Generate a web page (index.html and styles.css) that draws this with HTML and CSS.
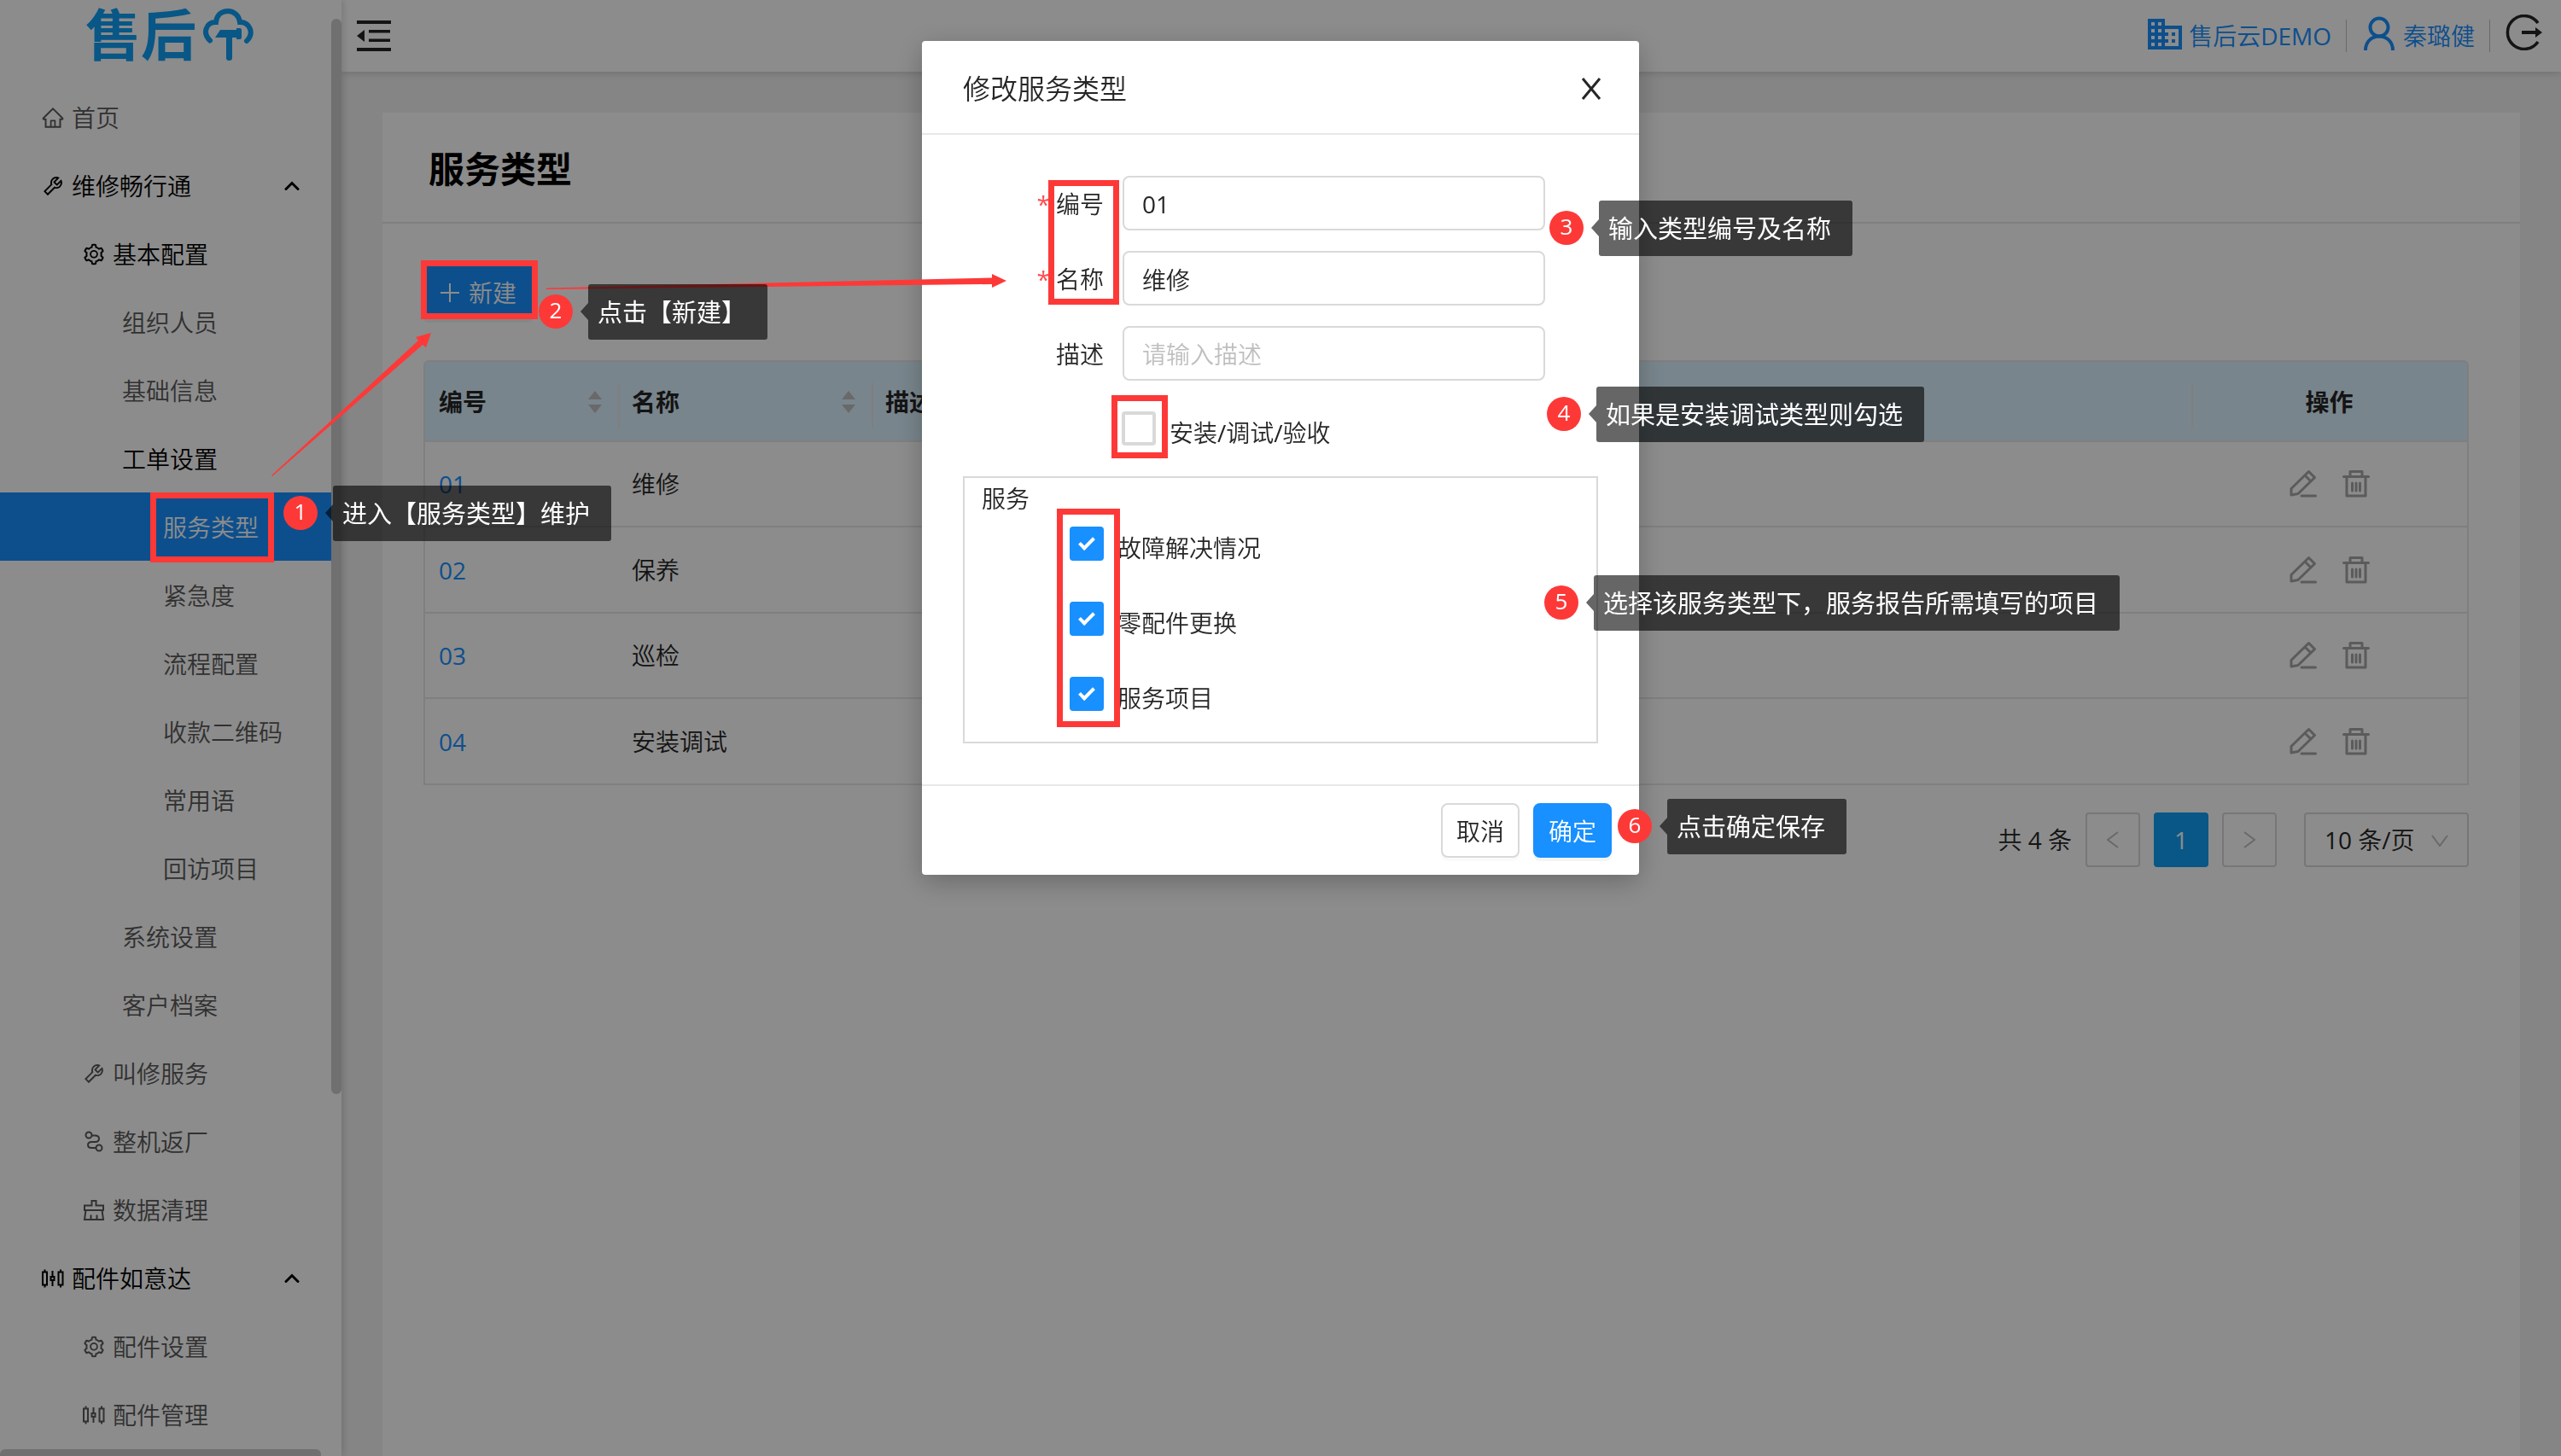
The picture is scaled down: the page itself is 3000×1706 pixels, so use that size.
FILE: index.html
```html
<!DOCTYPE html>
<html lang="zh-CN">
<head>
<meta charset="utf-8">
<meta name="viewport" content="width=device-width, initial-scale=1">
<title>服务类型</title>
<link rel="stylesheet" href="styles.css">
</head>
<body>
<svg class="sprite" aria-hidden="true">
  <symbol id="i-home" viewBox="0 0 1024 1024"><path d="M946.5 505L560.1 118.8l-25.9-25.9a31.5 31.5 0 0 0-44.4 0L77.5 505a63.9 63.9 0 0 0-18.8 46c.4 35.2 29.7 63.3 64.9 63.3h42.5V940h691.8V614.3h43.4c17.1 0 33.2-6.7 45.3-18.8a63.6 63.6 0 0 0 18.7-45.3c0-17-6.7-33.1-18.9-45.2zM568 868H456V664h112v204zm217.9-325.7V868H632V640c0-22.1-17.9-40-40-40H432c-22.1 0-40 17.9-40 40v228H238.1V542.3h-96l370-369.7 23.1 23.1L882 542.3h-96.1z"/></symbol>
  <symbol id="i-tool" viewBox="0 0 1024 1024"><path d="M876.6 239.5c-.5-.9-1.2-1.8-2-2.5-5-5-13.1-5-18.1 0L684.2 409.3l-67.9-67.9L788.7 169c.8-.8 1.4-1.6 2-2.5 3.6-6.1 1.6-13.9-4.5-17.5-98.2-58-226.8-44.7-311.3 39.7-67 67-89.2 162-66.5 247.4l-293 293c-3 3-2.8 7.9.3 11l169.7 169.7c3.1 3.1 8.1 3.3 11 .3l292.9-292.9c85.5 22.8 180.5.7 247.6-66.4 84.4-84.5 97.7-213.1 39.7-311.3zM786 499.8c-58.1 58.1-145.3 69.3-214.6 33.6l-8.8 8.8-.1-.1-274 274.1-79.2-79.2 230.1-230.1s0 .1.1.1l52.8-52.8c-35.7-69.3-24.5-156.5 33.6-214.6a184.2 184.2 0 0 1 144-53.5L537 318.9a32.05 32.05 0 0 0 0 45.3l124.5 124.5a32.05 32.05 0 0 0 45.3 0l132.8-132.8c3.7 51.8-14.4 104.8-53.6 143.9z"/></symbol>
  <symbol id="i-setting" viewBox="0 0 1024 1024"><path d="M924.8 625.7l-65.5-56c3.1-19 4.7-38.4 4.7-57.8s-1.6-38.8-4.7-57.8l65.5-56a32.03 32.03 0 0 0 9.3-35.2l-.9-2.6a443.74 443.74 0 0 0-79.7-137.9l-1.8-2.1a32.12 32.12 0 0 0-35.1-9.5l-81.3 28.9c-30-24.6-63.5-44-99.7-57.6l-15.7-85a32.05 32.05 0 0 0-25.8-25.7l-2.7-.5c-52.1-9.4-106.9-9.4-159 0l-2.7.5a32.05 32.05 0 0 0-25.8 25.7l-15.8 85.4a351.86 351.86 0 0 0-99 57.4l-81.9-29.1a32 32 0 0 0-35.1 9.5l-1.8 2.1a446.02 446.02 0 0 0-79.7 137.9l-.9 2.6c-4.5 12.5-.8 26.5 9.3 35.2l66.3 56.6c-3.1 18.8-4.6 38-4.6 57.1 0 19.2 1.5 38.4 4.6 57.1L99 625.5a32.03 32.03 0 0 0-9.3 35.2l.9 2.6c18.1 50.4 44.9 96.9 79.7 137.9l1.8 2.1a32.12 32.12 0 0 0 35.1 9.5l81.9-29.1c29.8 24.5 63.1 43.9 99 57.4l15.8 85.4a32.05 32.05 0 0 0 25.8 25.7l2.7.5a449.4 449.4 0 0 0 159 0l2.7-.5a32.05 32.05 0 0 0 25.8-25.7l15.7-85a350 350 0 0 0 99.7-57.6l81.3 28.9a32 32 0 0 0 35.1-9.5l1.8-2.1c34.8-41.1 61.6-87.5 79.7-137.9l.9-2.6c4.5-12.3.8-26.3-9.3-35zM788.3 465.9c2.5 15.1 3.8 30.6 3.8 46.1s-1.3 31-3.8 46.1l-6.6 40.1 74.7 63.9a370.03 370.03 0 0 1-42.6 73.6L721 702.8l-31.4 25.8c-23.9 19.6-50.5 35-79.3 45.8l-38.1 14.3-17.9 97a377.5 377.5 0 0 1-85 0l-17.9-97.2-37.8-14.5c-28.5-10.8-55-26.2-78.7-45.7l-31.4-25.9-93.4 33.2c-17-22.9-31.2-47.6-42.6-73.6l75.5-64.5-6.5-40c-2.4-14.9-3.7-30.3-3.7-45.5 0-15.3 1.2-30.6 3.7-45.5l6.5-40-75.5-64.5c11.3-26.1 25.6-50.7 42.6-73.6l93.4 33.2 31.4-25.9c23.7-19.5 50.2-34.9 78.7-45.7l37.9-14.3 17.9-97.2c28.1-3.2 56.8-3.2 85 0l17.9 97 38.1 14.3c28.7 10.8 55.4 26.2 79.3 45.8l31.4 25.8 92.8-32.9c17 22.9 31.2 47.6 42.6 73.6L781.8 426l6.5 39.9zM512 326c-97.2 0-176 78.8-176 176s78.8 176 176 176 176-78.8 176-176-78.8-176-176-176zm79.2 255.2A111.6 111.6 0 0 1 512 614c-29.9 0-58-11.7-79.2-32.8A111.6 111.6 0 0 1 400 502c0-29.9 11.7-58 32.8-79.2C454 401.6 482.1 390 512 390c29.9 0 58 11.6 79.2 32.8A111.6 111.6 0 0 1 624 502c0 29.9-11.7 58-32.8 79.2z"/></symbol>
  <symbol id="i-sliders" viewBox="0 0 28 28"><path fill="none" stroke="currentColor" stroke-width="2" d="M2 6.500h5v15H2zM4.500 3.500v3M4.500 21.500v3M11.500 12h4v4h-4zM13.500 5v7M13.500 16v7M20.500 6.500h5v15h-5zM23 3.500v3M23 21.500v3"/></symbol>
  <symbol id="i-route" viewBox="0 0 28 28"><g fill="none" stroke="currentColor" stroke-width="2"><circle cx="8" cy="6" r="3.500"/><circle cx="20" cy="21" r="3.500"/><path d="M11.500 6.500h4c6 0 6 7.500 0 7.500h-4c-6 0-6 7 0 7h5"/></g></symbol>
  <symbol id="i-clear" viewBox="0 0 28 28"><path fill="none" stroke="currentColor" stroke-width="2" d="M3 8.500h8.500V3h5v5.500H25V14H3zM4.500 14L3 25h22l-1.500-11M10.500 25v-5.500M17.500 25v-5.500"/></symbol>
  <symbol id="i-up" viewBox="0 0 18 12"><path fill="none" stroke="currentColor" stroke-width="3" d="M2 9.500L9 2.500l7 7" stroke-linecap="round"/></symbol>
  <symbol id="i-edit" viewBox="0 0 32 34"><path fill="none" stroke="currentColor" stroke-width="3" stroke-linejoin="round" stroke-linecap="round" d="M2 30v-7.500L22.500 2.500l7 7L10 28.500zM18 7l7 7M14 31h16.500"/></symbol>
  <symbol id="i-trash" viewBox="0 0 32 34"><path fill="none" stroke="currentColor" stroke-width="3" stroke-linejoin="round" stroke-linecap="round" d="M1.500 8.500h29M5 8.500V31h22V8.500M9 8V2.500h14V8M11.500 16v9M16 16v9M20.500 16v9"/></symbol>
</svg>

<div class="app">
  <aside class="sidebar">
    <div class="logo"><span class="logo-text">售后</span>
      <svg class="logo-mark" width="60" height="62" viewBox="0 0 60 62" aria-hidden="true"><g fill="none" stroke="currentColor" stroke-width="6" stroke-linecap="round"><path d="M8 37.500C-1 29 3 16 15 16C16 7 22 3 29 3s13 5 14 13c12 0 17 13 8 22"/></g><path fill="currentColor" d="M14 34l6-9h19v-2h5l1 2v9l-1 2h-5v-2h-5v24q0 3-3.500 3t-3.500-3V34z"/></svg>
    </div>
    <nav aria-label="主导航">
      <ul class="menu">
        <li><a href="#" class="l1"><svg class="ico"><use href="#i-home"/></svg>首页</a></li>
        <li><a href="#" class="l1 open"><svg class="ico"><use href="#i-tool"/></svg>维修畅行通<svg class="caret"><use href="#i-up"/></svg></a></li>
        <li><a href="#" class="l2 open"><svg class="ico"><use href="#i-setting"/></svg>基本配置</a></li>
        <li><a href="#" class="l3">组织人员</a></li>
        <li><a href="#" class="l3">基础信息</a></li>
        <li><a href="#" class="l3 open">工单设置</a></li>
        <li><a href="#" class="l4 active" aria-current="page">服务类型</a></li>
        <li><a href="#" class="l4">紧急度</a></li>
        <li><a href="#" class="l4">流程配置</a></li>
        <li><a href="#" class="l4">收款二维码</a></li>
        <li><a href="#" class="l4">常用语</a></li>
        <li><a href="#" class="l4">回访项目</a></li>
        <li><a href="#" class="l3">系统设置</a></li>
        <li><a href="#" class="l3">客户档案</a></li>
        <li><a href="#" class="l2"><svg class="ico"><use href="#i-tool"/></svg>叫修服务</a></li>
        <li><a href="#" class="l2"><svg class="ico"><use href="#i-route"/></svg>整机返厂</a></li>
        <li><a href="#" class="l2"><svg class="ico"><use href="#i-clear"/></svg>数据清理</a></li>
        <li><a href="#" class="l1 open"><svg class="ico"><use href="#i-sliders"/></svg>配件如意达<svg class="caret"><use href="#i-up"/></svg></a></li>
        <li><a href="#" class="l2"><svg class="ico"><use href="#i-setting"/></svg>配件设置</a></li>
        <li><a href="#" class="l2"><svg class="ico"><use href="#i-sliders"/></svg>配件管理</a></li>
      </ul>
    </nav>
    <div class="scroll-y"></div>
    <div class="scroll-x"></div>
  </aside>

  <div class="page">
    <header class="topbar">
      <button class="icon-btn" type="button" aria-label="收起菜单"><svg width="40" height="36" viewBox="0 0 40 36"><path fill="currentColor" d="M0 0h40v4H0zM14 11h25v3.500H14zM14 21.500h25V25H14zM0 32h40v4H0zM9 11v14L0 18z"/></svg></button>
      <div class="account">
        <a href="#" class="tenant"><svg width="40" height="36" viewBox="0 0 40 36"><path fill="currentColor" fill-rule="evenodd" d="M0 0h20v8h20v28H0zM4 4v4h4V4zM12 4v4h4V4zM4 12v4h4v-4zM12 12v4h4v-4zM4 20v4h4v-4zM12 20v4h4v-4zM4 28v4h4v-4zM12 28v4h4v-4zM20 12v4h4v4h-4v4h4v4h-4v4h16V12zM28 16h4v4h-4zM28 24h4v4h-4z"/></svg><span>售后云DEMO</span></a>
        <a href="#" class="user"><svg width="38" height="42" viewBox="0 0 38 42"><g fill="none" stroke="currentColor" stroke-width="4"><circle cx="19" cy="13" r="10.500"/><path d="M3 40c0-22 32-22 32 0"/></g></svg><span>秦璐健</span></a>
        <button class="icon-btn" type="button" aria-label="退出"><svg width="44" height="42" viewBox="0 0 44 42"><path fill="none" stroke="currentColor" stroke-width="3.500" d="M39 10A19.500 19.500 0 1 0 39 32"/><path fill="currentColor" d="M20 19h16v-4l8 6-8 6v-4H20z"/></svg></button>
      </div>
    </header>

    <main class="content">
      <section class="card">
        <h1>服务类型</h1>
        <div class="card-body">
          <button class="btn-new" type="button"><svg width="22" height="22" viewBox="0 0 22 22"><path stroke="currentColor" stroke-width="2" d="M11 0v22M0 11h22"/></svg>新建</button>
          <table>
            <colgroup><col class="c-code"><col class="c-name"><col><col class="c-act"></colgroup>
            <thead><tr>
              <th><div class="th">编号<svg class="sorter" viewBox="0 0 16 26"><path d="M8 0l8 10H0zM8 26l8-10H0z"/></svg></div></th>
              <th><div class="th">名称<svg class="sorter" viewBox="0 0 16 26"><path d="M8 0l8 10H0zM8 26l8-10H0z"/></svg></div></th>
              <th><div class="th">描述</div></th>
              <th class="act">操作</th>
            </tr></thead>
            <tbody>
              <tr><td><a href="#">01</a></td><td>维修</td><td></td><td><div class="ops"><button class="icon-btn" type="button" aria-label="编辑"><svg width="32" height="34"><use href="#i-edit"/></svg></button><button class="icon-btn" type="button" aria-label="删除"><svg width="32" height="34"><use href="#i-trash"/></svg></button></div></td></tr>
              <tr><td><a href="#">02</a></td><td>保养</td><td></td><td><div class="ops"><button class="icon-btn" type="button" aria-label="编辑"><svg width="32" height="34"><use href="#i-edit"/></svg></button><button class="icon-btn" type="button" aria-label="删除"><svg width="32" height="34"><use href="#i-trash"/></svg></button></div></td></tr>
              <tr><td><a href="#">03</a></td><td>巡检</td><td></td><td><div class="ops"><button class="icon-btn" type="button" aria-label="编辑"><svg width="32" height="34"><use href="#i-edit"/></svg></button><button class="icon-btn" type="button" aria-label="删除"><svg width="32" height="34"><use href="#i-trash"/></svg></button></div></td></tr>
              <tr><td><a href="#">04</a></td><td>安装调试</td><td></td><td><div class="ops"><button class="icon-btn" type="button" aria-label="编辑"><svg width="32" height="34"><use href="#i-edit"/></svg></button><button class="icon-btn" type="button" aria-label="删除"><svg width="32" height="34"><use href="#i-trash"/></svg></button></div></td></tr>
            </tbody>
          </table>
          <div class="pager">
            <span>共 4 条</span>
            <button class="pg off" type="button" aria-label="上一页"><svg width="14" height="20" viewBox="0 0 14 20"><path fill="none" stroke="currentColor" stroke-width="2" d="M13 1L1 10l12 9"/></svg></button>
            <button class="pg on" type="button">1</button>
            <button class="pg off" type="button" aria-label="下一页"><svg width="14" height="20" viewBox="0 0 14 20"><path fill="none" stroke="currentColor" stroke-width="2" d="M1 1l12 9-12 9"/></svg></button>
            <div class="size">
              <select aria-label="每页条数"><option>10 条/页</option></select>
              <svg width="20" height="14" viewBox="0 0 20 14"><path fill="none" stroke="currentColor" stroke-width="2" d="M1 1l9 12 9-12"/></svg>
            </div>
          </div>
        </div>
      </section>
    </main>
  </div>
</div>

<div class="mask">
  <form class="modal" role="dialog" aria-labelledby="dlg-title">
    <header class="modal-head">
      <h2 id="dlg-title">修改服务类型</h2>
      <button class="icon-btn" type="button" aria-label="关闭"><svg width="24" height="26" viewBox="0 0 24 26"><path stroke="currentColor" stroke-width="3" d="M2 1l20 24M22 1L2 25"/></svg></button>
    </header>
    <div class="modal-body">
      <div class="field req"><label for="f-code">编号</label><input id="f-code" type="text" value="01"></div>
      <div class="field req"><label for="f-name">名称</label><input id="f-name" type="text" value="维修"></div>
      <div class="field"><label for="f-desc">描述</label><input id="f-desc" type="text" placeholder="请输入描述"></div>
      <div class="check install"><input id="f-install" type="checkbox"><label for="f-install">安装/调试/验收</label></div>
      <div class="group" role="group" aria-labelledby="grp">
        <p id="grp">服务</p>
        <div class="check"><input id="s1" type="checkbox" checked><label for="s1">故障解决情况</label></div>
        <div class="check"><input id="s2" type="checkbox" checked><label for="s2">零配件更换</label></div>
        <div class="check"><input id="s3" type="checkbox" checked><label for="s3">服务项目</label></div>
      </div>
    </div>
    <footer class="modal-foot">
      <button class="btn" type="button">取消</button>
      <button class="btn primary" type="button">确定</button>
    </footer>
    <div class="frame frame-fields"></div>
    <div class="frame frame-install"></div>
    <div class="frame frame-services"></div>
    <div class="note n3"><b>3</b><span>输入类型编号及名称</span></div>
    <div class="note n4"><b>4</b><span>如果是安装调试类型则勾选</span></div>
    <div class="note n5"><b>5</b><span>选择该服务类型下，服务报告所需填写的项目</span></div>
    <div class="note n6"><b>6</b><span>点击确定保存</span></div>
  </form>
</div>

<div class="guide">
  <svg class="arrow a1" width="190" height="170" viewBox="0 0 190 170"><path d="M0 167L172 9 169 5 187 0 181 17 177 14 1 168z"/></svg>
  <svg class="arrow a2" width="540" height="20" viewBox="0 0 540 20"><path d="M0 17.500L522 5.500V1l17 8-17 8v-4L0 19z"/></svg>
  <div class="frame frame-menu"></div>
  <div class="frame frame-new"></div>
  <div class="note n1"><b>1</b><span>进入【服务类型】维护</span></div>
  <div class="note n2"><b>2</b><span>点击【新建】</span></div>
</div>
</body>
</html>
```
FILE: styles.css
```css
:root {
  --blue: #1890ff;
  --brand: #0f9ff5;
  --red: #fd3938;
  --line: #e8e8e8;
  --border: #d9d9d9;
  --text: #262626;
  --strong: "Open Sans", "Noto Sans CJK SC", sans-serif;
}

* { box-sizing: border-box; }

body {
  margin: 0;
  background: #f2f2f2;
  color: var(--text);
  font: 400 28px/44px "Open Sans", "Noto Sans CJK SC DemiLight", "Noto Sans CJK SC", sans-serif;
  overflow: hidden;
}

h1, h2, p, ul { margin: 0; padding: 0; }
ul { list-style: none; }
a { color: var(--blue); text-decoration: none; }
svg { display: block; flex: none; }
button, input, select { font: inherit; color: inherit; margin: 0; }
button { cursor: pointer; }

.sprite { position: absolute; width: 0; height: 0; }

.icon-btn { padding: 0; border: 0; background: none; }

.app { display: flex; min-height: 100vh; }

/* Sidebar */
.sidebar {
  position: relative;
  z-index: 1;
  flex: none;
  width: 400px;
  background: #fff;
  box-shadow: 2px 0 8px rgba(0, 0, 0, .15);
}

.logo {
  display: flex;
  gap: 8px;
  height: 97px;
  padding: 10px 0 0 100px;
  color: var(--brand);
}

.logo-text { font: 700 65px/60px var(--strong); }

.menu { width: 388px; }

.menu a {
  display: flex;
  align-items: center;
  height: 80px;
  padding-top: 2px;
  color: #595959;
}

.menu .l1 { padding-left: 48px; }
.menu .l2 { padding-left: 96px; }
.menu .l3 { padding-left: 143px; }
.menu .l4 { padding-left: 191px; }
.menu .open { color: #000; }
.menu .active { background: var(--blue); color: #fff; }

.ico { width: 28px; height: 28px; margin-right: 8px; fill: currentColor; }
.caret { width: 18px; height: 12px; margin: 0 37px 0 auto; }

.scroll-y, .scroll-x { position: absolute; background: #ccc; }
.scroll-y { top: 22px; right: 0; width: 12px; height: 1260px; border-radius: 6px; }
.scroll-x { left: 0; bottom: 0; width: 376px; height: 8px; border-radius: 6px 6px 0 0; }

/* Top bar */
.page { flex: 1; display: flex; flex-direction: column; min-width: 0; }

.topbar {
  display: flex;
  align-items: center;
  justify-content: space-between;
  height: 84px;
  padding: 0 22px 0 18px;
  background: #fff;
  box-shadow: 0 2px 8px rgba(0, 0, 0, .15);
}

.account { display: flex; align-items: center; height: 38px; }
.account a { display: flex; align-items: center; height: 38px; border-right: 1px solid #bfbfbf; }
.account a svg { margin-bottom: 5px; }
.account .icon-btn { margin-bottom: 8px; }
.tenant { gap: 8px; padding-right: 17px; }
.user { gap: 9px; padding: 0 17px 0 19px; margin-right: 17px; }

/* Card */
.content { flex: 1; display: flex; padding: 48px 48px 0; }
.card { flex: 1; min-width: 0; background: #fff; }

.card h1 {
  padding: 36px 54px 32px;
  border-bottom: 2px solid var(--line);
  color: #000;
  font: 700 42px/60px var(--strong);
}

.card-body { padding: 48px 60px 0 48px; }

.btn-new {
  display: flex;
  align-items: center;
  gap: 11px;
  height: 64px;
  margin-bottom: 48px;
  padding: 2px 20px 0;
  border: 0;
  border-radius: 6px;
  background: var(--blue);
  color: #fff;
  box-shadow: 0 4px 0 rgba(0, 0, 0, .045);
}

table {
  width: 100%;
  table-layout: fixed;
  border: 2px solid var(--line);
  border-bottom: 0;
  border-radius: 6px 6px 0 0;
  border-spacing: 0;
}

.c-code { width: 226px; }
.c-name { width: 297px; }
.c-act { width: 323px; }

th, td {
  height: 100px;
  padding: 0 16px;
  border-bottom: 2px solid var(--line);
  text-align: left;
}

tbody tr:nth-child(even) td { height: 101px; }

th {
  position: relative;
  height: 94px;
  background: #dcf2ff;
  font-family: var(--strong);
  font-weight: 700;
}

th + th::before {
  content: "";
  position: absolute;
  left: 0;
  top: 24px;
  width: 2px;
  height: 54px;
  background: var(--line);
}

.th { display: flex; align-items: center; justify-content: space-between; padding-top: 2px; }
.sorter { width: 16px; height: 26px; margin-right: 3px; fill: #bfbfbf; }
th.act { padding-top: 2px; text-align: center; }
.ops { display: flex; justify-content: center; gap: 30px; color: #a6a6a6; }

/* Pagination */
.pager {
  display: flex;
  align-items: center;
  justify-content: flex-end;
  gap: 16px;
  margin-top: 32px;
}

.pg, .size select {
  height: 64px;
  border: 2px solid var(--border);
  border-radius: 4px;
  background: #fff;
}

.pg { display: grid; place-items: center; width: 64px; padding: 0; }
.pg.off { color: #bfbfbf; }
.pg.on { border-color: var(--brand); background: var(--brand); color: #fff; }

.size { position: relative; margin-left: 16px; }
.size select { appearance: none; width: 193px; padding: 0 22px; }
.size svg { position: absolute; right: 24px; top: 26px; color: #bfbfbf; pointer-events: none; }

/* Dialog */
.mask {
  position: fixed;
  inset: 0;
  z-index: 10;
  background: rgba(0, 0, 0, .45);
}

.modal {
  position: relative;
  width: 840px;
  margin: 48px auto;
  border-radius: 4px;
  background: #fff;
  box-shadow: 0 8px 32px rgba(0, 0, 0, .25);
}

.modal-head {
  display: flex;
  align-items: center;
  justify-content: space-between;
  height: 110px;
  padding: 4px 44px 0 48px;
  border-bottom: 2px solid var(--line);
}

.modal-head h2 { font-size: 32px; font-weight: 400; }

.modal-body { display: grid; gap: 24px; padding: 48px; }

.field { display: flex; align-items: center; padding-right: 62px; }
.field label { width: 187px; padding: 2px 22px 0 0; text-align: right; }
.req label::before { content: "*"; margin-right: 7px; color: #ff4d4f; }

.field input {
  flex: 1;
  min-width: 0;
  height: 64px;
  padding: 2px 21px 0;
  border: 2px solid var(--border);
  border-radius: 8px;
  background: #fff;
}

.field input::placeholder { color: #bfbfbf; opacity: 1; }

.check { display: flex; align-items: center; gap: 16px; height: 64px; }
.check label { padding-top: 10px; }
.install { padding-left: 186px; }

.check input {
  display: grid;
  place-items: center;
  appearance: none;
  width: 40px;
  height: 40px;
  border: 4px solid var(--border);
  border-radius: 4px;
  background: #fff;
}

.check input:checked { border-color: var(--blue); background: var(--blue); }

.check input:checked::after {
  content: "";
  width: 14px;
  height: 6px;
  margin-top: -4px;
  border: solid #fff;
  border-width: 0 0 4px 4px;
  transform: rotate(-45deg);
}

.group {
  display: grid;
  gap: 24px;
  padding: 0 20px 24px;
  border: 2px solid var(--border);
}

.group p { height: 45px; margin-bottom: -24px; padding-top: 2px; }
.group .check { padding-left: 103px; }

.modal-foot {
  display: flex;
  justify-content: flex-end;
  gap: 16px;
  padding: 20px 32px;
  border-top: 2px solid var(--line);
}

.btn {
  width: 92px;
  height: 64px;
  padding: 2px 0 0;
  border: 2px solid var(--border);
  border-radius: 8px;
  background: #fff;
  box-shadow: 0 4px 0 rgba(0, 0, 0, .02);
}

.btn.primary {
  border-color: var(--blue);
  background: var(--blue);
  color: #fff;
  box-shadow: 0 4px 0 rgba(0, 0, 0, .045);
}

/* Step-by-step guide drawn over the page */
.guide { position: absolute; top: 0; left: 0; z-index: 20; }
.frame, .arrow, .note { position: absolute; }
.frame { border: 7px solid var(--red); pointer-events: none; }
.arrow { fill: var(--red); }

.note {
  display: flex;
  gap: 18px;
  height: 65px;
  color: #fff;
  font-family: var(--strong);
  white-space: nowrap;
}

.note b {
  width: 40px;
  height: 40px;
  margin-top: 12px;
  border-radius: 50%;
  background: var(--red);
  font-size: 26px;
  font-weight: 400;
  line-height: 36px;
  text-align: center;
}

.note span {
  position: relative;
  padding: 0 25px 0 11px;
  border-radius: 3px;
  background: rgba(0, 0, 0, .6);
  font-size: 29px;
  line-height: 65px;
}

.note span::before {
  content: "";
  position: absolute;
  left: -9px;
  top: 22px;
  border: solid transparent;
  border-width: 10px 9px 10px 0;
  border-right-color: rgba(0, 0, 0, .6);
}

.a1 { left: 318px; top: 390px; }
.a2 { left: 640px; top: 320px; }
.frame-menu { left: 176px; top: 577px; width: 145px; height: 82px; }
.frame-new { left: 493px; top: 305px; width: 137px; height: 69px; }
.n1 { left: 332px; top: 569px; }
.n2 { left: 631px; top: 333px; }

.frame-fields { left: 148px; top: 163px; width: 83px; height: 146px; }
.frame-install { left: 222px; top: 415px; width: 66px; height: 74px; }
.frame-services { left: 158px; top: 548px; width: 74px; height: 256px; }
.n3 { left: 735px; top: 187px; }
.n4 { left: 732px; top: 405px; }
.n5 { left: 729px; top: 626px; }
.n6 { left: 815px; top: 888px; }
```
